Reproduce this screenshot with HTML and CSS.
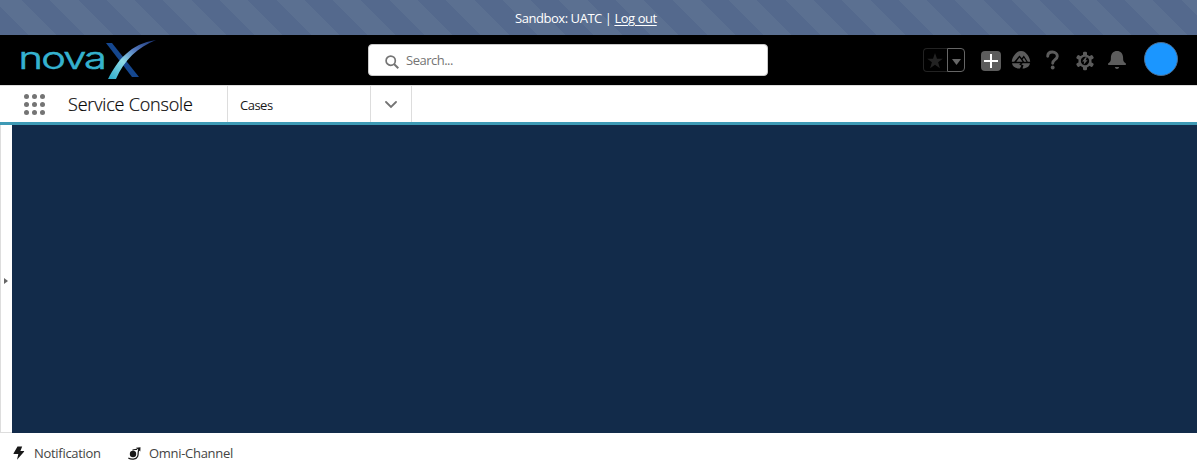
FILE: index.html
```html
<!DOCTYPE html>
<html lang="en">
<head>
<meta charset="utf-8">
<title>Service Console</title>
<link rel="stylesheet" href="styles.css">
</head>
<body>
<div class="banner"><span class="banner-text">Sandbox: UATC | <a class="logout">Log out</a></span></div>
<header class="header">
  <svg class="logo" width="140" height="46" viewBox="0 0 140 46">
    <defs>
      <linearGradient id="swoosh" x1="0" y1="1" x2="1" y2="0">
        <stop offset="0" stop-color="#29a9c8"/><stop offset=".38" stop-color="#8edbe8"/><stop offset=".65" stop-color="#5479bd"/><stop offset="1" stop-color="#17306f"/>
      </linearGradient>
    </defs>
    <text class="logo-text" transform="translate(2.500 34) scale(1.340 1)" textLength="66" lengthAdjust="spacing">nova</text>
    <path d="M90 8h6l27 34h-7z" fill="#15478f"/>
    <path d="M92 44C102 25 114 9 140 5C122 12 108 25 100 44z" fill="url(#swoosh)"/>
  </svg>
  <div class="search">
    <svg width="14" height="14" viewBox="0 0 14 14" fill="none" stroke="#747474" stroke-width="1.700"><circle cx="5.700" cy="5.700" r="4.600"/><path d="M9 9l4.300 4.200" stroke-width="2"/></svg>
    <span class="search-text">Search...</span>
  </div>
  <div class="actions">
    <div class="favorites">
      <span class="fav-star"><svg width="16" height="16" viewBox="0 0 16 16"><path d="M8 0l2 5.700h5.800l-4.700 3.600 1.800 5.900L8 11.700l-4.900 3.500 1.800-5.900L.2 5.700H6z" fill="#222"/></svg></span>
      <span class="fav-menu"><svg width="9" height="6" viewBox="0 0 9 6"><path d="M0 0h9L4.500 6z" fill="#666"/></svg></span>
    </div>
    <svg class="i-add" width="20" height="20" viewBox="0 0 20 20"><rect width="20" height="20" rx="4" fill="#5c5c5c"/><path d="M10 3v14M3 10h14" stroke="#fff" stroke-width="2"/></svg>
    <svg class="i-trail" width="20" height="20" viewBox="0 0 20 20">
      <path d="M.8 11.700C1 7.500 4.500 2.500 8 1.300q2-.7 4 0c3.500 1.200 7 6.200 7.200 10.400h-2.400L12.800 5.500l-2 2.800-2.300-2.800-5.300 6.200z" fill="#5c5c5c"/>
      <path d="M5.300 11.700L8.500 7.500l3 4.200zM11.600 9.600l1.300-1.900 2.500 4h-2.300zM1 13.200h8.700l-1.500 1.300 2.200 1.300-1.600 2.800C4.500 18.500 1.500 16.500 1 13.200zM11.700 13.200H19c-.4 3-3 5-7.500 5.400l1-3.300-2.300-1z" fill="#5c5c5c"/>
    </svg>
    <svg class="i-help" width="13" height="20" viewBox="0 0 13 20"><path d="M1.700 6.300C1.700 3.500 3.500 2 6.400 2s4.900 1.800 4.900 4.300c0 3.300-4.600 3.500-4.600 6.900" fill="none" stroke="#5c5c5c" stroke-width="2.900" stroke-linecap="round"/><circle cx="6.700" cy="17.500" r="1.900" fill="#5c5c5c"/></svg>
    <svg class="i-gear" width="18" height="20" viewBox="-9 -10 18 20">
      <g fill="#5c5c5c"><rect id="tooth" x="-2" y="-9.300" width="4" height="18.600" rx="1.200"/><use href="#tooth" transform="rotate(60)"/><use href="#tooth" transform="rotate(120)"/><circle r="6.600"/></g>
      <circle r="4.200"/><path d="M.6-3.700L-2.800.6h2L-1.400 3.700 2.600-.8h-2L2-3.700z" fill="#5c5c5c"/>
    </svg>
    <svg class="i-bell" width="18" height="18" viewBox="0 0 18 18"><path d="M0 13.300c0-1 .5-1.100 1.100-1.500 1.600-1.200 1.800-2.500 1.800-5C2.900 2.500 5.500 0 9 0s6.100 2.500 6.100 6.800c0 2.500.2 3.800 1.800 5 .6.400 1.100.5 1.100 1.500 0 .5-.3.700-.7.700H.7c-.4 0-.7-.2-.7-.7zM6.800 16h4.400c-.4 1.300-1.100 2-2.200 2s-1.800-.7-2.200-2z" fill="#5c5c5c"/></svg>
    <span class="avatar"></span>
  </div>
</header>
<nav class="nav">
  <div class="launcher"><i></i><i></i><i></i><i></i><i></i><i></i><i></i><i></i><i></i></div>
  <div class="app"><span class="app-name">Service Console</span></div>
  <div class="tab"><span class="tab-name">Cases</span></div>
  <div class="tab-menu"><svg width="12" height="8" viewBox="0 0 12 8"><path d="M1 1l5 5 5-5" fill="none" stroke="#747474" stroke-width="1.800" stroke-linecap="round"/></svg></div>
</nav>
<main class="workspace">
  <aside class="rail"><svg width="4" height="6" viewBox="0 0 4 6"><path d="M0 0l4 3-4 3z" fill="#666"/></svg></aside>
</main>
<footer class="utility">
  <svg width="12" height="14" viewBox="0 0 12 14"><path d="M4.500.500h4.700L7.400 5h3.300c.5 0 .6.500.3.800L4 13.700l1.300-5.600H1.200c-.6 0-.8-.4-.6-.9z" fill="#181818"/></svg>
  <span class="notification">Notification</span>
  <svg class="i-omni" width="13" height="13" viewBox="0 0 13 13"><circle cx="5" cy="7" r="3.200" fill="#181818"/><path d="M.3 11c2.900 1.900 8 1.600 9.300-1.600s-.3-4.700 1.600-6.900M4.500 3.300c1.700-1 3.400-.6 4.500-1.200" fill="none" stroke="#181818" stroke-width="1.200"/><path d="M8 .8l4.500-.5-.2 4.200z" fill="#181818"/></svg>
  <span class="omni">Omni-Channel</span>
</footer>
</body>
</html>
```
FILE: styles.css
```css
* { box-sizing: border-box; }
body {
  margin: 0;
  height: 473px;
  display: flex;
  flex-direction: column;
  overflow: hidden;
  background: #fff;
  color: #181818;
  font: 13px/20px "Open Sans", "Noto Sans", sans-serif;
}
svg { display: block; flex: none; }
.banner {
  height: 35px;
  padding: 8px 0 0 515px;
  color: #fff;
  background: repeating-linear-gradient(45deg, #54698d, #54698d 20px, #5b7091 20px, #5b7091 40px);
}
.banner-text { display: block; white-space: nowrap; font-weight: 500; letter-spacing: -.45px; }
.logout { text-decoration: underline; text-underline-offset: 2px; }
.header {
  height: 50px;
  display: flex;
  align-items: flex-start;
  background: #000;
}
.logo { margin-left: 16px; }
.logo-text { font: 300 31px "Inter", "Open Sans", sans-serif; fill: #35b2cf; stroke: #35b2cf; stroke-width: .6; }
.search {
  width: 400px;
  height: 32px;
  margin: 9px 0 0 212px;
  padding-left: 16px;
  display: flex;
  align-items: center;
  gap: 7px;
  background: #fff;
  border: 1px solid #c9c9c9;
  border-radius: 4px;
}
.search svg { position: relative; top: 2px; }
.search-text { color: #747474; letter-spacing: -.5px; }
.actions { display: flex; align-items: flex-start; padding-left: 155px; }
.favorites { display: flex; width: 42px; height: 24px; margin-top: 13px; }
.fav-star, .fav-menu { display: flex; align-items: center; justify-content: center; border: 1px solid #222; }
.fav-star { width: 24px; border-right: 0; border-radius: 4px 0 0 4px; padding: 2px 1px 0 0; }
.fav-menu { width: 18px; padding-top: 4px; border-color: #666; border-radius: 0 4px 4px 0; }
.i-add { margin: 16px 0 0 16px; }
.i-trail { margin: 15px 0 0 10px; }
.i-help { margin: 15px 0 0 15px; }
.i-gear { margin: 16px 0 0 17px; }
.i-bell { margin: 16px 0 0 14px; }
.avatar {
  width: 34px;
  height: 34px;
  margin: 7px 0 0 18px;
  border-radius: 50%;
  border: 1px solid #4b6d91;
  background: #1b96ff;
}
.nav {
  height: 40px;
  display: flex;
  border-top: 1px solid #ddd;
  border-bottom: 3px solid #3e9ab5;
}
.launcher {
  width: 22px;
  margin: 8px 0 0 24px;
  display: grid;
  grid-template-columns: repeat(3, 5px);
  grid-auto-rows: 5px;
  gap: 3px;
}
.launcher i { border-radius: 50%; background: #747474; }
.app { width: 182px; padding: 8px 0 0 22px; border-right: 1px solid #ddd; }
.app-name { font-size: 18px; font-weight: 300; color: #080707; letter-spacing: -.18px; white-space: nowrap; -webkit-text-stroke: .2px #080707; }
.tab { width: 143px; padding: 9px 0 0 12px; border-right: 1px solid #ddd; }
.tab-name { letter-spacing: -.5px; }
.tab-menu { width: 41px; display: flex; align-items: center; justify-content: center; border-right: 1px solid #ddd; padding-top: 2px; }
.workspace { height: 308px; display: flex; background: #122b4a; }
.rail {
  width: 12px;
  padding: 5px 0 0 3px;
  display: flex;
  align-items: center;
  background: #fff;
  border: solid #ddd;
  border-width: 0 0 1px 1px;
}
.utility {
  height: 40px;
  display: flex;
  align-items: center;
  padding-left: 13px;
  color: #444;
}
.utility span { letter-spacing: -.3px; }
.notification { width: 67px; margin: 0 27px 0 9px; }
.omni { margin-left: 8px; white-space: nowrap; }
```
